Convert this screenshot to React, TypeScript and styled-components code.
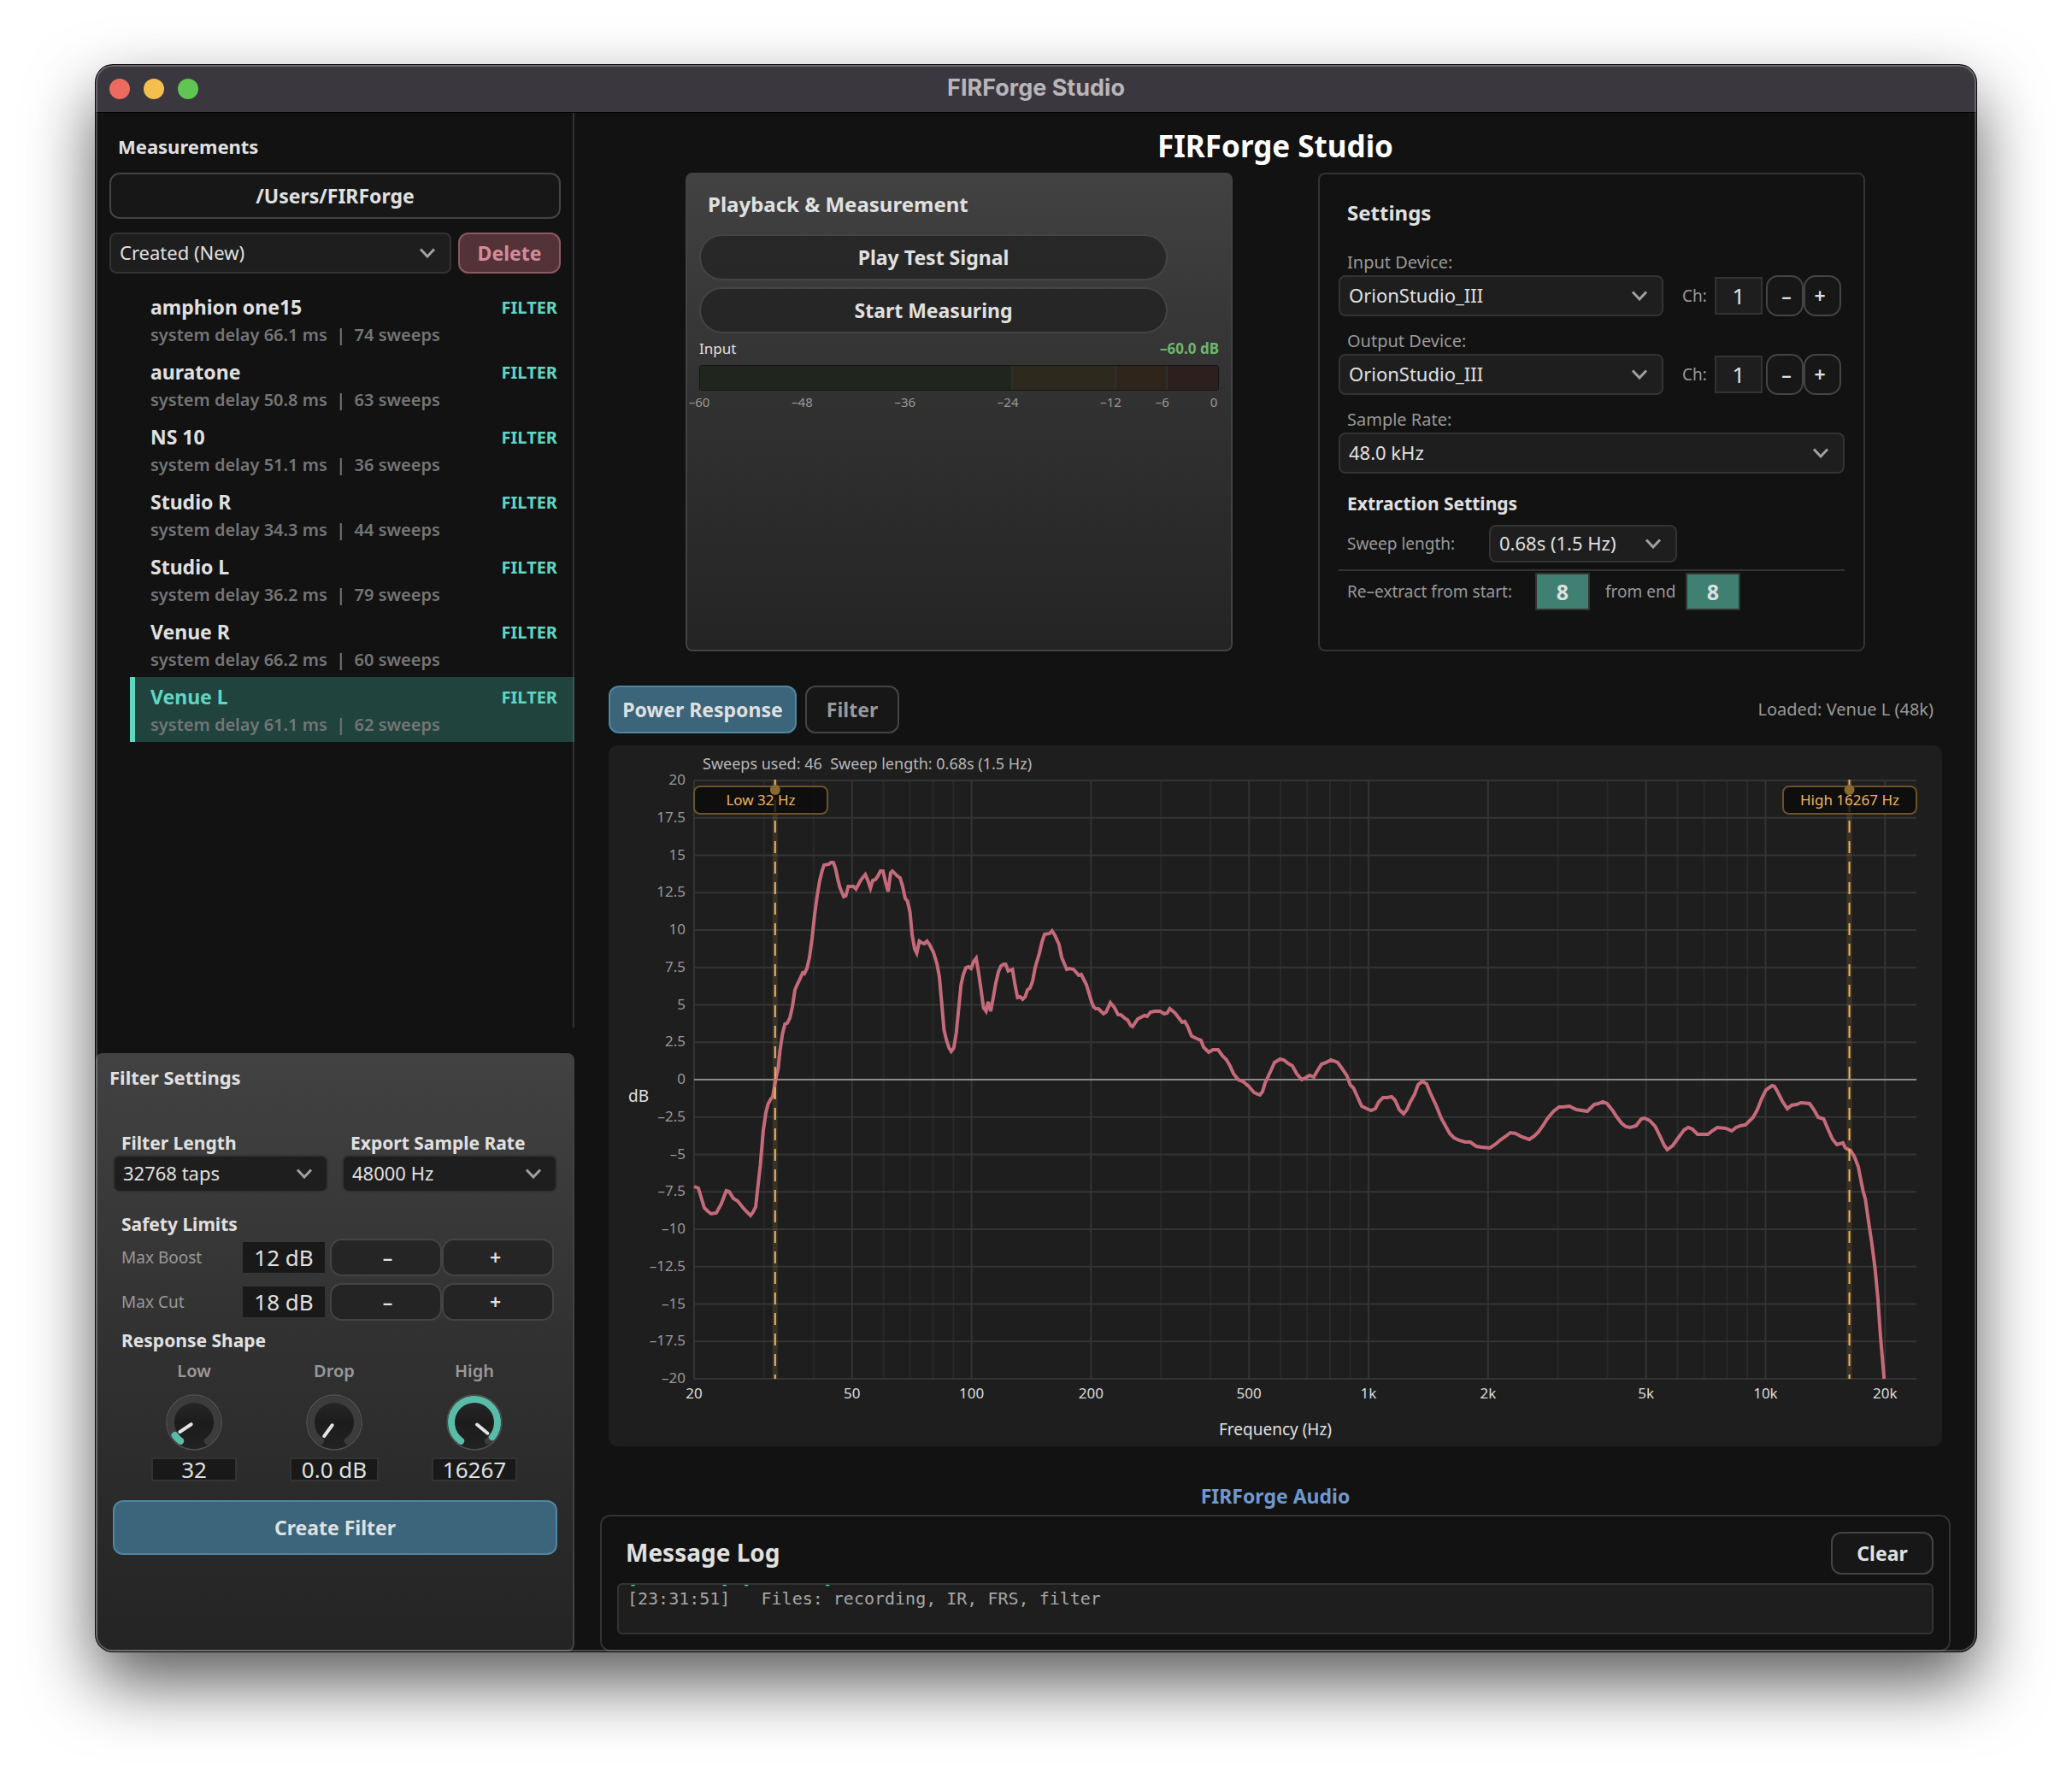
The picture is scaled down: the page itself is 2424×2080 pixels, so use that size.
import React from "react";
import styled, { createGlobalStyle, css } from "styled-components";

const c = {
  bg: "#121212",
  field: "#1e1e1e",
  line: "#333333",
  outline: "#444444",
  text: "#e0e0e0",
  muted: "#999999",
  faint: "#757575",
  teal: "#5fd6c3",
  blue: "#3a657a",
  blueLine: "#4f86a0",
  amber: "#f0b45a",
  curve: "#c46a7a",
};

const sans = `"Noto Sans", "Open Sans", "DejaVu Sans", sans-serif`;

const GlobalStyle = createGlobalStyle`
  *, *::before, *::after { box-sizing: border-box; }
  body { margin: 0; background: #fff; font-family: ${sans}; color: ${c.text}; }
  button, input, select { font-family: inherit; color: inherit; margin: 0; }
  h1, h2, h3, p, ul { margin: 0; padding: 0; }
  ul { list-style: none; }
`;

const Page = styled.div`
  min-height: 100vh;
  padding: 76px 112px 148px;
  display: flex;
`;

const Window = styled.div`
  position: relative;
  flex: 1;
  min-width: 0;
  display: flex;
  flex-direction: column;
  background: ${c.bg};
  border-radius: 20px;
  overflow: hidden;
  box-shadow: 0 0 0 1px #0a0a0a, 0 36px 80px rgba(0, 0, 0, 0.65);
  &::after {
    content: "";
    position: absolute;
    inset: 0;
    border-radius: inherit;
    pointer-events: none;
    box-shadow: inset 0 0 0 2px rgba(255, 255, 255, 0.24);
  }
`;

const TitleBar = styled.header`
  height: 56px;
  padding: 0 16px;
  display: grid;
  grid-template-columns: 1fr auto 1fr;
  align-items: center;
  background: #3b373e;
  border-bottom: 1px solid #000;
`;

const Lights = styled.div`
  display: flex;
  gap: 16px;
`;

const Light = styled.button<{ $color: string }>`
  width: 24px;
  height: 24px;
  padding: 0;
  border: 0;
  border-radius: 50%;
  background: ${(p) => p.$color};
`;

const WindowName = styled.span`
  padding-bottom: 2px;
  font: 700 27px/32px Inter, Roboto, sans-serif;
  color: #b8b6ba;
`;

const Body = styled.div`
  flex: 1;
  display: flex;
`;

const Sidebar = styled.aside`
  width: 560px;
  flex: none;
  display: flex;
  flex-direction: column;
`;

const Library = styled.section`
  flex: 1;
  margin-bottom: 30px;
  padding: 24px 14px 0 16px;
  border-right: 2px solid ${c.line};
`;

const Heading = styled.h2<{ $size?: number; $indent?: number }>`
  padding: 0 0 2px ${(p) => p.$indent ?? 10}px;
  font-size: ${(p) => p.$size ?? 22}px;
  line-height: 30px;
  font-weight: 700;
`;

const SubHeading = styled.h3`
  font-size: 21px;
  line-height: 24px;
  font-weight: 700;
  padding-left: 10px;
`;

const Button = styled.button<{ $tone?: "blue" | "red"; $dim?: boolean; $round?: number; $h?: number; $w?: number }>`
  height: ${(p) => p.$h ?? 54}px;
  width: ${(p) => (p.$w ? `${p.$w}px` : "100%")};
  flex: ${(p) => (p.$w ? "none" : "initial")};
  padding: 0;
  border: 2px solid ${c.outline};
  border-radius: ${(p) => p.$round ?? 12}px;
  background: rgba(26, 26, 26, 0.6);
  color: ${(p) => (p.$dim ? c.muted : c.text)};
  font-size: 23px;
  line-height: 28px;
  font-weight: 700;
  ${(p) => p.$tone === "blue" && css`background: ${c.blue}; border-color: ${c.blueLine};`}
  ${(p) => p.$tone === "red" && css`background: #533238; border-color: #8c5a64; color: #d38c9b;`}
`;

const StepButton = styled(Button)<{ $side: "left" | "right" }>`
  padding: ${(p) => (p.$side === "left" ? "0 0 0 4px" : "0 6px 0 0")};
  border-radius: 14px;
  font-weight: 600;
`;

const SortRow = styled.div`
  display: flex;
  gap: 8px;
  margin: 16px 0;
  h2 + & { margin-top: 14px; }
`;

const SelectBox = styled.div<{ $w?: number }>`
  position: relative;
  flex: ${(p) => (p.$w ? "none" : "1")};
  width: ${(p) => (p.$w ? `${p.$w}px` : "auto")};
  min-width: 0;
  svg {
    position: absolute;
    right: 18px;
    top: 50%;
    margin-top: -6px;
    pointer-events: none;
  }
`;

const SelectInput = styled.select<{ $h: number }>`
  appearance: none;
  display: block;
  width: 100%;
  height: ${(p) => p.$h}px;
  padding: 0 48px 2px 10px;
  border: 2px solid ${c.line};
  border-radius: 8px;
  background: ${c.field};
  font-size: 22px;
  line-height: 28px;
`;

function Select({ id, label, options, w, h = 48 }: { id: string; label?: string; options: string[]; w?: number; h?: number }) {
  return (
    <SelectBox $w={w}>
      <SelectInput id={id} aria-label={label} $h={h}>
        {options.map((o) => (
          <option key={o}>{o}</option>
        ))}
      </SelectInput>
      <svg width="20" height="12" viewBox="0 0 20 12" fill="none" aria-hidden="true">
        <path d="M2 1.5 L10 10 L18 1.5" stroke="#a0a0a0" strokeWidth="3" />
      </svg>
    </SelectBox>
  );
}

const List = styled.ul`
  margin: 0 -16px 0 24px;
`;

const Item = styled.button<{ $active: boolean }>`
  display: grid;
  grid-template-columns: 1fr auto;
  row-gap: 6px;
  width: 100%;
  height: 76px;
  padding: 9px 20px 9px 18px;
  border: 0;
  border-left: 6px solid ${(p) => (p.$active ? c.teal : "transparent")};
  background: ${(p) => (p.$active ? "rgba(72, 208, 190, 0.26)" : "transparent")};
  text-align: left;
  font-weight: 700;
`;

const ItemName = styled.span<{ $active: boolean }>`
  font-size: 23px;
  line-height: 28px;
  color: ${(p) => (p.$active ? c.teal : c.text)};
`;

const ItemTag = styled.span`
  font-size: 20px;
  line-height: 30px;
  color: ${c.teal};
`;

const ItemMeta = styled.span`
  grid-column: 1 / -1;
  font-size: 20px;
  line-height: 22px;
  font-weight: 600;
  white-space: pre;
  color: ${c.faint};
`;

const shaded = css`
  border: 2px solid #424242;
  border-radius: 8px;
  background: linear-gradient(#424242, #323232 45%, #242424);
`;

const FilterPanel = styled.section`
  ${shaded}
  padding: 11px 18px 111px 14px;
`;

const FilterForm = styled.div`
  padding-left: 4px;
`;

const PairRow = styled.div`
  display: grid;
  grid-template-columns: 1fr 1fr;
  gap: 16px;
  margin: 48px 0 25px;
`;

const StackLabel = styled.label`
  display: block;
  padding: 0 10px 2px;
  font-size: 21px;
  line-height: 24px;
  font-weight: 700;
`;

const LimitRow = styled.div`
  display: grid;
  grid-template-columns: 142px 102px 1fr 1fr;
  align-items: center;
  padding: 0 4px 0 10px;
  margin-top: 5px;
  & + & { margin-top: 8px; }
  & + h3 { margin-top: 11px; }
`;

const SmallLabel = styled.label`
  font-size: 19px;
  line-height: 24px;
  color: ${c.muted};
`;

const Value = styled.input<{ $w: number; $h: number; $frame?: boolean; $dark?: boolean }>`
  width: ${(p) => p.$w}px;
  height: ${(p) => p.$h}px;
  flex: none;
  padding: 0;
  border: ${(p) => (p.$frame ? `2px solid ${c.line}` : "0")};
  background: ${(p) => (p.$dark ? "#191919" : c.field)};
  font-size: 26px;
  text-align: center;
`;

const Knobs = styled.div`
  display: grid;
  grid-template-columns: repeat(3, 164px);
  justify-content: center;
  padding-right: 2px;
  margin: 12px 0 22px;
`;

const KnobCell = styled.div`
  display: flex;
  flex-direction: column;
  align-items: center;
  gap: 8px;
`;

const KnobLabel = styled.label`
  margin-bottom: 7px;
  font-size: 20px;
  line-height: 24px;
  font-weight: 600;
  color: ${c.muted};
`;

const Dial = styled.div`
  position: relative;
  width: 66px;
  height: 66px;
  svg { display: block; }
  input {
    position: absolute;
    inset: 0;
    width: 100%;
    height: 100%;
    opacity: 0;
  }
`;

const START = 216;
const SWEEP = 288;

function polar(r: number, deg: number) {
  const a = (deg * Math.PI) / 180;
  return `${(33 + r * Math.sin(a)).toFixed(2)} ${(33 - r * Math.cos(a)).toFixed(2)}`;
}

function arc(r: number, from: number, to: number) {
  return `M${polar(r, from)} A${r} ${r} 0 ${to - from > 180 ? 1 : 0} 1 ${polar(r, to)}`;
}

function Knob({ id, label, value, amount, w }: { id: string; label: string; value: string; amount: number; w: number }) {
  const end = START + SWEEP * amount;
  return (
    <KnobCell>
      <KnobLabel htmlFor={id}>{label}</KnobLabel>
      <Dial>
        <svg width="66" height="66" viewBox="0 0 66 66" aria-hidden="true">
          <defs>
            <linearGradient id={`${id}-face`} x1="0" y1="0" x2="0" y2="1">
              <stop offset="0" stopColor="#2a2a2a" />
              <stop offset="0.5" stopColor="#1c1c1c" />
              <stop offset="1" stopColor="#222222" />
            </linearGradient>
          </defs>
          <circle cx="33" cy="33" r="32" fill={`url(#${id}-face)`} stroke="#505050" strokeWidth="1.5" />
          <path d={arc(27, START, START + SWEEP)} fill="none" stroke="#3c3c3c" strokeWidth="8" strokeLinecap="round" />
          {amount > 0 && (
            <path d={arc(27, START, end)} fill="none" stroke="#58bda8" strokeWidth="8" strokeLinecap="round" />
          )}
          <path d={`M${polar(4, end)} L${polar(20, end)}`} stroke="#e4e4e4" strokeWidth="4" strokeLinecap="round" />
        </svg>
        <input id={id} type="range" min="0" max="100" defaultValue={Math.round(amount * 100)} />
      </Dial>
      <Value aria-label={`${label} value`} defaultValue={value} $w={w} $h={28} $frame $dark />
    </KnobCell>
  );
}

const Main = styled.main`
  flex: 1;
  min-width: 0;
  display: flex;
  flex-direction: column;
  padding: 19px 30px 0;
`;

const AppTitle = styled.h1`
  font-size: 35px;
  line-height: 40px;
  text-align: center;
  color: #fff;
`;

const Panels = styled.div`
  display: grid;
  grid-template-columns: repeat(2, minmax(0, 640px));
  column-gap: 100px;
  justify-content: center;
  margin: 11px 0 40px;
`;

const Playback = styled.section`
  ${shaded}
  min-height: 560px;
  padding: 20px 14px;
`;

const PlayButtons = styled.div`
  display: grid;
  gap: 8px;
  margin: 18px 60px 6px 0;
`;

const MeterHead = styled.div`
  display: flex;
  justify-content: space-between;
  font-size: 17px;
  line-height: 24px;
  strong { color: #6db56d; font-weight: 700; }
`;

const Meter = styled.div`
  display: grid;
  grid-template-columns: 36fr 12fr 6fr 6fr;
  height: 30px;
  margin: 7px 0 3px;
  border: 1px solid #141414;
  border-radius: 3px;
  overflow: hidden;
`;

const Zone = styled.span<{ $color: string }>`
  background: ${(p) => p.$color};
  & + & { border-left: 2px solid #302f2c; }
`;

const Ticks = styled.div`
  display: grid;
  grid-template-columns: 12fr 12fr 12fr 12fr 6fr 6fr 0;
  margin-right: 6px;
  font-size: 15px;
  line-height: 20px;
  color: ${c.muted};
  span {
    width: 0;
    display: flex;
    justify-content: center;
    white-space: nowrap;
  }
`;

const Settings = styled.section`
  padding: 30px 22px;
  border: 2px solid ${c.line};
  border-radius: 8px;
`;

const FieldLabel = styled.label`
  display: block;
  margin: 17px 0 3px;
  padding-left: 10px;
  font-size: 20px;
  line-height: 24px;
  color: ${c.muted};
  h2 + & { margin-top: 29px; }
`;

const DeviceRow = styled.div`
  display: flex;
  align-items: center;
  padding-right: 4px;
`;

const ChLabel = styled.label`
  width: 60px;
  padding-left: 22px;
  font-size: 19px;
  line-height: 24px;
  color: ${c.muted};
`;

const Steps = styled.div`
  display: flex;
  margin-left: 4px;
`;

const Extraction = styled.div`
  margin-top: 23px;
`;

const ExtractRow = styled.div<{ $divided?: boolean }>`
  display: flex;
  align-items: center;
  padding: ${(p) => (p.$divided ? "2px 0 0 10px" : "13px 0 8px 10px")};
  border-top: ${(p) => (p.$divided ? `2px solid ${c.line}` : "0")};
`;

const ExtractLabel = styled(SmallLabel)<{ $w: number; $left?: number }>`
  width: ${(p) => p.$w}px;
  padding-left: ${(p) => p.$left ?? 0}px;
`;

const Count = styled(Value)`
  font-size: 25px;
  font-weight: 700;
  background: #3f8073;
`;

const Tabs = styled.div`
  display: flex;
  align-items: center;
  gap: 10px;
  padding: 0 20px 0 10px;
`;

const Loaded = styled.p`
  margin-left: auto;
  font-size: 20px;
  line-height: 28px;
  color: ${c.muted};
`;

const ChartCard = styled.figure`
  margin: 14px 10px 42px;
  border-radius: 10px;
  background: ${c.field};
  overflow: hidden;
  svg { display: block; width: 100%; height: auto; font-family: ${sans}; }
`;

const SiteLink = styled.a`
  align-self: center;
  margin-bottom: 6px;
  font-size: 23px;
  line-height: 32px;
  font-weight: 700;
  color: #6f98cf;
  text-decoration: none;
`;

const Log = styled.section`
  flex: 1;
  padding: 18px 18px 18px;
  border: 2px solid ${c.line};
  border-radius: 12px;
`;

const LogHead = styled.div`
  display: flex;
  align-items: center;
  justify-content: space-between;
  margin-bottom: 10px;
`;

const LogBox = styled.div`
  height: 60px;
  display: flex;
  flex-direction: column;
  justify-content: flex-end;
  overflow: hidden;
  padding: 0 10px 28px;
  border: 2px solid ${c.line};
  border-radius: 6px;
  background: ${c.field};
`;

const LogLine = styled.p<{ $ok?: boolean }>`
  flex: none;
  font: 20px/24px "DejaVu Sans Mono", monospace;
  white-space: pre;
  color: ${(p) => (p.$ok ? c.teal : "#a6a6a6")};
`;

const measurements = [
  ["amphion one15", "66.1", "74"],
  ["auratone", "50.8", "63"],
  ["NS 10", "51.1", "36"],
  ["Studio R", "34.3", "44"],
  ["Studio L", "36.2", "79"],
  ["Venue R", "66.2", "60"],
  ["Venue L", "61.1", "62"],
];

const CURVE =
  "100,516 105,518 112,541 116,545 120,548 126,547 132,536 137.7,521 141,522 146,530 151,533 159,543 166,550 169,546 172,540 " +
  "177.5,491 181,450 184,430 186.4,420 189.4,414 192,411 195.4,391 198.4,378 200.4,358 203.3,338 206.3,326 209,325 212,319 215,306 " +
  "218,286 221,279 224,273 227,266 229,267 232,261 235,248 238,226 241,198 244,176 247,158 250,146 252,140 258,139 260,137 263,137 " +
  "265.5,144 268,156 270.5,166 275,177 277.5,176 280.4,165 286.4,165 289.4,168 295.4,157 300.3,151 303.3,158 306.3,167 309,158 312,157 " +
  "315,153 318,147 321,147 324,160 327,171 330,149 332,147 338,153 341,155 344,165 347,179 349.6,182 352.6,195 355,221 358,238 " +
  "360.5,243 363.5,229 366.5,231 369.5,232 372.5,229 375.5,233 380,242 384,255 387,271 390,305 392.4,333 395.3,345 398.3,354 " +
  "400.8,358 403.8,354 406.8,336 409.8,305 412.3,280 415,268 418,260 421,259 424,261 427,253 430,249 432.7,265 435.6,285 438.6,307 " +
  "441.6,311 444,300 447,311 450,295 453,278 456,265 459,258 462,256 464.5,256 467.5,264 472.5,262 475.4,280 478.4,295 481.4,294 " +
  "484.4,297 487.4,294 490,286 493,284 496,276 499,260 504,243 507,230 510,221 516,220 518.7,217 522,222 527,233 530,248 536,262 " +
  "539,261 544,262 550,269 553,268 556,274 559,280 562,290 565,300 567.5,306 570,308 573,308 579,314 582,312 587,301 592,307 596,315 " +
  "599,315 605,320 607,321 611,328 613,329 619,320 623,318 627,316 630,317 634,312 639,311 645,311 650,314 653.5,313 656.5,308 " +
  "662.5,313 668,320 671,324 674,323 677,328 682,340 688,343 693,345 696,353 702,359 707,356 713,356 718,363 723,368 727,375 731,384 " +
  "736.6,391 742,393 749,399 755,406 759,408 762,409 765,405 768,395 775,380 779,371 785.6,367 790,368 795,372 800,375 805,384 811,391 " +
  "815,389 820,386 825,388 829,381 834,373 839.5,371 845,368 853,371 858,378 864,387 867.5,397 871.5,401 876,411 881,422 887,425 " +
  "892,427 897,425 901,417 906,412 911,412 916,411 920,415 925,426 930,431 934,426 938,417 943,408 947,397 952,393 957,396 961,406 " +
  "968,421 974,436 979,445 984,454 989,459 995,462 1002,464 1008,464 1015,469 1021,470 1031,471 1037,467 1044,461 1050,457 1055,453 " +
  "1061,454 1068.5,458 1077,461 1083,457 1088,452 1093,445 1098,437 1105.5,428 1112,423 1117,423 1124,422 1132,426 1145,428 1148,425 " +
  "1153,420 1158,419 1163,417 1168,419 1174.5,427 1179,434 1185,442 1190,446 1195,447 1202,445 1208,437 1212,436 1218,439 1224.5,446 " +
  "1229.5,456 1235,468 1238.5,473 1245,468 1250,461 1258,450 1263,447 1268,449 1274,455 1286,455 1291,451 1297,447 1307,448 1314,451 " +
  "1319,447 1324,445 1330,444 1339,435 1344,426 1349,413 1354,403 1361,398 1364,399 1368,406 1373,416 1379,425 1384,421 1390,420 " +
  "1395,418 1405,419 1410,426 1415,435 1421.5,437 1426.5,449 1432,461 1437,467 1444,465 1447,471 1453,474 1457.4,481 1462,493 " +
  "1465.3,510 1467.5,521 1470.3,531 1473.7,555 1477.6,581 1481.5,611 1485,648 1487.7,688 1492.2,741";

const LEFT = 100;
const RIGHT = 1530;
const TOP = 41;
const BOTTOM = 741;
const xOf = (hz: number) => LEFT + ((RIGHT - LEFT) * Math.log10(hz / 20)) / Math.log10(24000 / 20);
const yOf = (db: number) => (TOP + BOTTOM) / 2 - (db * (BOTTOM - TOP)) / 40;

const minor = [30, 40, 60, 70, 80, 90, 300, 400, 600, 700, 800, 900, 3000, 4000, 6000, 7000, 8000, 9000];
const major = [20, 50, 100, 200, 500, 1000, 2000, 5000, 10000, 20000];
const levels = Array.from({ length: 17 }, (_, i) => 20 - i * 2.5);

function Marker({ hz, label, boxX }: { hz: number; label: string; boxX: number }) {
  const x = xOf(hz);
  return (
    <g>
      <line x1={x} x2={x} y1={TOP} y2={BOTTOM} stroke={c.amber} strokeOpacity="0.14" strokeWidth="6" />
      <line x1={x} x2={x} y1={TOP - 1} y2={BOTTOM} stroke={c.amber} strokeWidth="2" strokeDasharray="14 10" />
      <rect x={boxX} y={48} width={156} height={32} rx={7} fill="#0a0a0a" fillOpacity="0.8" stroke="#6b5229" strokeWidth="2" />
      <circle cx={x} cy={52} r={6} fill="#8a6831" />
      <text x={boxX + 78} y={70} fontSize="17" textAnchor="middle" fill={c.amber}>
        {label}
      </text>
    </g>
  );
}

const Caption = styled.text`
  white-space: pre;
`;

function Chart() {
  return (
    <ChartCard>
      <svg viewBox="0 0 1560 820" role="img" aria-label="Power response of Venue L">
        <Caption x="110" y="28" fontSize="18" fill="#b8b8b8">
          {"Sweeps used: 46  Sweep length: 0.68s (1.5 Hz)"}
        </Caption>
        {minor.map((f) => (
          <line key={f} x1={xOf(f)} x2={xOf(f)} y1={TOP} y2={BOTTOM} stroke="#292929" strokeWidth="2" />
        ))}
        {major.map((f) => (
          <line key={f} x1={xOf(f)} x2={xOf(f)} y1={TOP} y2={BOTTOM} stroke="#343434" strokeWidth="2" />
        ))}
        {levels.map((d) => (
          <line key={d} x1={LEFT} x2={RIGHT} y1={yOf(d)} y2={yOf(d)} stroke="#343434" strokeWidth="2" />
        ))}
        <line x1={LEFT} x2={RIGHT} y1={yOf(0)} y2={yOf(0)} stroke="#8c8c8c" strokeWidth="2" />
        {levels.map((d) => (
          <text key={d} x="90" y={yOf(d) + 5} fontSize="17" textAnchor="end" fill={c.muted}>
            {String(d).replace("-", "\u2013")}
          </text>
        ))}
        {major.map((f) => (
          <text key={f} x={xOf(f)} y="764" fontSize="17" textAnchor="middle" fill="#dcdcdc">
            {f >= 1000 ? `${f / 1000}k` : f}
          </text>
        ))}
        <text x="35" y="417" fontSize="19" textAnchor="middle" fill="#e0e0e0">dB</text>
        <text x="780" y="807" fontSize="19" textAnchor="middle" fill="#e0e0e0">Frequency (Hz)</text>
        <polyline points={CURVE} fill="none" stroke={c.curve} strokeWidth="4" strokeLinejoin="miter" />
        <Marker hz={32} label="Low 32 Hz" boxX={100} />
        <Marker hz={16267} label="High 16267 Hz" boxX={1374} />
      </svg>
    </ChartCard>
  );
}

function Device({ id, label }: { id: string; label: string }) {
  return (
    <>
      <FieldLabel htmlFor={id}>{label} Device:</FieldLabel>
      <DeviceRow>
        <Select id={id} options={["OrionStudio_III"]} />
        <ChLabel htmlFor={`${id}-ch`}>Ch:</ChLabel>
        <Value id={`${id}-ch`} defaultValue="1" $w={56} $h={44} $frame />
        <Steps>
          <StepButton $side="left" $w={44} $h={48} aria-label={`${label} channel down`}>{"\u2013"}</StepButton>
          <StepButton $side="right" $w={44} $h={48} aria-label={`${label} channel up`}>+</StepButton>
        </Steps>
      </DeviceRow>
    </>
  );
}

function Limit({ id, label, value }: { id: string; label: string; value: string }) {
  return (
    <LimitRow>
      <SmallLabel htmlFor={id}>{label}</SmallLabel>
      <Value id={id} defaultValue={value} $w={96} $h={36} $dark />
      <StepButton $side="left" $h={44} aria-label={`${label} down`}>{"\u2013"}</StepButton>
      <StepButton $side="right" $h={44} aria-label={`${label} up`}>+</StepButton>
    </LimitRow>
  );
}

export default function App() {
  return (
    <>
      <GlobalStyle />
      <Page>
        <Window>
          <TitleBar>
            <Lights>
              <Light $color="#ec6a5e" aria-label="Close" />
              <Light $color="#f4bf4f" aria-label="Minimize" />
              <Light $color="#61c554" aria-label="Zoom" />
            </Lights>
            <WindowName>FIRForge Studio</WindowName>
          </TitleBar>
          <Body>
            <Sidebar>
              <Library>
                <Heading>Measurements</Heading>
                <SortRow>
                  <Button>/Users/FIRForge</Button>
                </SortRow>
                <SortRow>
                  <Select id="sort" label="Sort measurements" options={["Created (New)"]} />
                  <Button $tone="red" $w={120} $h={48}>Delete</Button>
                </SortRow>
                <List>
                  {measurements.map(([name, delay, sweeps]) => {
                    const active = name === "Venue L";
                    return (
                      <li key={name}>
                        <Item $active={active}>
                          <ItemName $active={active}>{name}</ItemName>
                          <ItemTag>FILTER</ItemTag>
                          <ItemMeta>{`system delay ${delay} ms  |  ${sweeps} sweeps`}</ItemMeta>
                        </Item>
                      </li>
                    );
                  })}
                </List>
              </Library>
              <FilterPanel>
                <Heading $indent={0}>Filter Settings</Heading>
                <FilterForm>
                  <PairRow>
                    <div>
                      <StackLabel htmlFor="taps">Filter Length</StackLabel>
                      <Select id="taps" options={["32768 taps"]} h={44} />
                    </div>
                    <div>
                      <StackLabel htmlFor="export-rate">Export Sample Rate</StackLabel>
                      <Select id="export-rate" options={["48000 Hz"]} h={44} />
                    </div>
                  </PairRow>
                  <SubHeading>Safety Limits</SubHeading>
                  <Limit id="boost" label="Max Boost" value="12 dB" />
                  <Limit id="cut" label="Max Cut" value="18 dB" />
                  <SubHeading>Response Shape</SubHeading>
                  <Knobs>
                    <Knob id="low" label="Low" value="32" amount={0.07} w={100} />
                    <Knob id="drop" label="Drop" value="0.0 dB" amount={0} w={104} />
                    <Knob id="high" label="High" value="16267" amount={0.95} w={100} />
                  </Knobs>
                  <Button $tone="blue" $h={64}>Create Filter</Button>
                </FilterForm>
              </FilterPanel>
            </Sidebar>
            <Main>
              <AppTitle>FIRForge Studio</AppTitle>
              <Panels>
                <Playback>
                  <Heading $size={24}>Playback &amp; Measurement</Heading>
                  <PlayButtons>
                    <Button $round={27}>Play Test Signal</Button>
                    <Button $round={27}>Start Measuring</Button>
                  </PlayButtons>
                  <MeterHead>
                    <span>Input</span>
                    <strong>{"\u2013"}60.0 dB</strong>
                  </MeterHead>
                  <Meter role="meter" aria-label="Input level" aria-valuemin={-60} aria-valuemax={0} aria-valuenow={-60}>
                    <Zone $color="#20261e" />
                    <Zone $color="#2d291d" />
                    <Zone $color="#2f251b" />
                    <Zone $color="#2e1f1f" />
                  </Meter>
                  <Ticks>
                    {["\u201360", "\u201348", "\u201336", "\u201324", "\u201312", "\u20136", "0"].map((t) => (
                      <span key={t}>{t}</span>
                    ))}
                  </Ticks>
                </Playback>
                <Settings>
                  <Heading $size={24}>Settings</Heading>
                  <Device id="input" label="Input" />
                  <Device id="output" label="Output" />
                  <FieldLabel htmlFor="rate">Sample Rate:</FieldLabel>
                  <Select id="rate" options={["48.0 kHz"]} />
                  <Extraction>
                    <SubHeading>Extraction Settings</SubHeading>
                    <ExtractRow>
                      <ExtractLabel htmlFor="sweep" $w={166}>Sweep length:</ExtractLabel>
                      <Select id="sweep" options={["0.68s (1.5 Hz)"]} w={220} h={44} />
                    </ExtractRow>
                    <ExtractRow $divided>
                      <ExtractLabel htmlFor="from-start" $w={220}>Re{"\u2013"}extract from start:</ExtractLabel>
                      <Count id="from-start" defaultValue="8" $w={64} $h={44} $frame />
                      <ExtractLabel htmlFor="from-end" $w={112} $left={18}>from end</ExtractLabel>
                      <Count id="from-end" defaultValue="8" $w={64} $h={44} $frame />
                    </ExtractRow>
                  </Extraction>
                </Settings>
              </Panels>
              <Tabs>
                <Button $tone="blue" $w={220} $h={56}>Power Response</Button>
                <Button $dim $w={110} $h={56}>Filter</Button>
                <Loaded>Loaded: Venue L (48k)</Loaded>
              </Tabs>
              <Chart />
              <SiteLink href="#">FIRForge Audio</SiteLink>
              <Log>
                <LogHead>
                  <Heading $size={28}>Message Log</Heading>
                  <Button $w={120} $h={50}>Clear</Button>
                </LogHead>
                <LogBox>
                  <LogLine $ok>[23:31:51] [SUCCESS] Saved measurement Venue L</LogLine>
                  <LogLine>[23:31:51]   Files: recording, IR, FRS, filter</LogLine>
                </LogBox>
              </Log>
            </Main>
          </Body>
        </Window>
      </Page>
    </>
  );
}
